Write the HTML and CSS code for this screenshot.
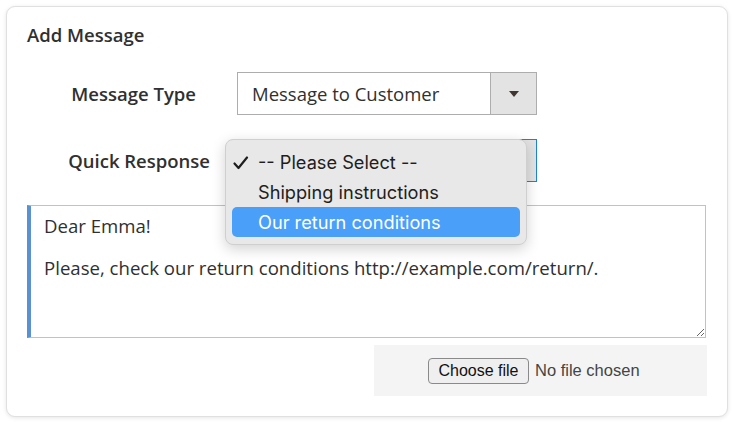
FILE: index.html
```html
<!DOCTYPE html>
<html>
<head>
<meta charset="utf-8">
<link rel="stylesheet" href="styles.css">
</head>
<body>
<div class="card">
  <h2 class="title">Add Message</h2>
  <div class="row">
    <div class="label label-type">Message Type</div>
    <div class="select">
      <div class="select-value">Message to Customer</div>
      <div class="select-arrow"><span class="tri"></span></div>
    </div>
  </div>
  <div class="row row-quick">
    <div class="label label-quick">Quick Response</div>
    <div class="select select-focus">
      <div class="select-value"></div>
      <div class="select-arrow"></div>
    </div>
    <div class="popup">
      <div class="opt"><svg class="check" width="16" height="14" viewBox="0 0 16 14"><path d="M1.5 7.5 L5.5 12 L14 1.5" fill="none" stroke="#1e1e1e" stroke-width="2.2" stroke-linecap="round" stroke-linejoin="round"/></svg>-- Please Select --</div>
      <div class="opt">Shipping instructions</div>
      <div class="opt opt-active">Our return conditions</div>
    </div>
  </div>
  <textarea class="msg">Dear Emma!

Please, check our return conditions http://example.com/return/.</textarea>
  <div class="file-row">
    <div class="file-box">
      <span class="file-btn">Choose file</span>
      <span class="file-text">No file chosen</span>
    </div>
  </div>
</div>
</body>
</html>
```
FILE: styles.css
```css
html, body {
  margin: 0;
  padding: 0;
  background: #fff;
}
body {
  padding: 6px 7px 5px 6px;
  font-family: "Open Sans", sans-serif;
  color: #333;
}
.card {
  box-sizing: border-box;
  width: 722px;
  height: 411px;
  border: 1px solid #e0e0e0;
  border-radius: 9px;
  box-shadow: 0 1px 4px rgba(0,0,0,0.10);
  padding: 17px 20px 20px 20px;
  background: #fff;
}
.title {
  margin: 0;
  font-size: 18.5px;
  font-weight: 600;
  line-height: 22px;
  color: #303030;
}
.row {
  display: flex;
  align-items: center;
  margin-top: 26px;
  height: 43px;
  position: relative;
}
.row-quick {
  margin-top: 24px;
}
.label {
  box-sizing: border-box;
  width: 210px;
  text-align: right;
  font-size: 18.5px;
  font-weight: 600;
  color: #303030;
  white-space: nowrap;
}
.label-type { padding-right: 41px; }
.label-quick { padding-right: 27px; }
.select {
  box-sizing: border-box;
  width: 300px;
  height: 43px;
  border: 1px solid #adadad;
  display: flex;
  background: #fff;
}
.select-focus {
  border-color: #1a84d6;
}
.select-value {
  flex: 1;
  padding-left: 14px;
  font-size: 18.5px;
  line-height: 41px;
  color: #303030;
}
.select-arrow {
  width: 45px;
  background: #e3e3e3;
  border-left: 1px solid #adadad;
  display: flex;
  align-items: center;
  justify-content: center;
}
.select-focus .select-arrow {
  border-left: none;
}
.tri {
  width: 0;
  height: 0;
  border-left: 5px solid transparent;
  border-right: 5px solid transparent;
  border-top: 6px solid #41362f;
}
.popup {
  position: absolute;
  left: 198px;
  top: 0;
  width: 302px;
  height: 106px;
  box-sizing: border-box;
  background: #e8e8e8;
  border: 1px solid #cfcfcf;
  border-radius: 8px;
  box-shadow: 0 4px 14px rgba(0,0,0,0.18);
  padding: 7px 6px 0 6px;
  font-family: "Inter", "Liberation Sans", sans-serif;
  font-size: 18.2px;
  color: #1e1e1e;
}
.opt {
  position: relative;
  height: 30px;
  line-height: 30px;
  padding-left: 26px;
  border-radius: 5px;
}
.check {
  position: absolute;
  left: 1px;
  top: 9px;
}
.opt-active {
  background: #4a9ff9;
  color: #fff;
}
.msg {
  display: block;
  box-sizing: border-box;
  width: 679px;
  height: 133px;
  margin: 23px 0 0 0;
  border: 1px solid #c2c2c2;
  border-left: 4px solid #5a91d2;
  padding: 9px 13px;
  font-family: "Open Sans", sans-serif;
  font-size: 18.6px;
  line-height: 21px;
  color: #303030;
  resize: vertical;
  outline: none;
}
.file-row {
  display: flex;
  justify-content: flex-end;
  margin-top: 7px;
}
.file-box {
  width: 333px;
  height: 51px;
  background: #f4f4f4;
  display: flex;
  align-items: center;
  box-sizing: border-box;
  padding-left: 54px;
  font-family: "Liberation Sans", Arial, sans-serif;
  font-size: 16px;
}
.file-btn {
  box-sizing: border-box;
  width: 101px;
  height: 26px;
  border: 1px solid #8a8a8a;
  border-radius: 4px;
  background: #efefef;
  text-align: center;
  line-height: 24px;
  color: #111;
}
.file-text {
  margin-left: 6px;
  font-size: 16.5px;
  color: #444;
}
```
